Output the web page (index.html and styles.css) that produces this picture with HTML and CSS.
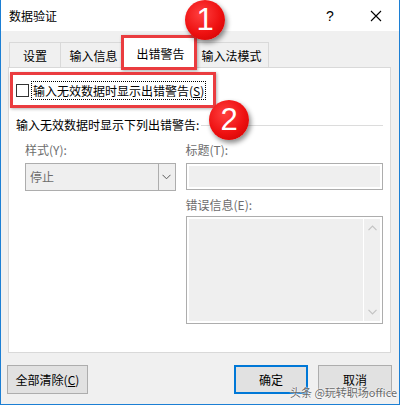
FILE: index.html
```html
<!DOCTYPE html>
<html lang="zh">
<head>
<meta charset="utf-8">
<title>数据验证</title>
<link rel="stylesheet" href="styles.css">
</head>
<body>
<div class="window">
  <div class="titlebar">
    <span class="title">数据验证</span>
    <span class="tb-btn">?</span>
    <span class="tb-btn">
      <svg width="12" height="12" viewBox="0 0 12 12"><path d="M1 1L11 11M11 1L1 11" stroke="#000" stroke-width="1.1" fill="none"/></svg>
    </span>
  </div>
  <div class="dialog">
    <div class="tabs">
      <div class="tab t1">设置</div>
      <div class="tab t2">输入信息</div>
      <div class="tab t3 active">出错警告</div>
      <div class="tab t4">输入法模式</div>
    </div>
    <div class="panel">
      <div class="check-row">
        <span class="checkbox"></span>
        <span class="check-label">输入无效数据时显示出错警告(<u>S</u>)</span>
      </div>
      <div class="group-head">
        <span>输入无效数据时显示下列出错警告:</span>
        <span class="group-line"></span>
      </div>
      <div class="fields">
        <div class="col left">
          <div class="lbl">样式(Y):</div>
          <div class="select">
            <span class="select-text">停止</span>
            <span class="select-btn">
              <svg width="9" height="6" viewBox="0 0 9 6"><path d="M0.5 0.8L4.5 4.8L8.5 0.8" stroke="#5a5a5a" stroke-width="1" fill="none"/></svg>
            </span>
          </div>
        </div>
        <div class="col right">
          <div class="lbl">标题(T):</div>
          <div class="input"></div>
          <div class="lbl lbl2">错误信息(E):</div>
          <div class="textarea">
            <div class="ta-fill"></div>
            <div class="ta-scroll">
              <svg width="9" height="6" viewBox="0 0 9 6"><path d="M0.5 5.2L4.5 1.2L8.5 5.2" stroke="#c3c3c3" stroke-width="1.2" fill="none"/></svg>
              <svg width="9" height="6" viewBox="0 0 9 6"><path d="M0.5 0.8L4.5 4.8L8.5 0.8" stroke="#c3c3c3" stroke-width="1.2" fill="none"/></svg>
            </div>
          </div>
        </div>
      </div>
    </div>
    <div class="buttons">
      <div class="btn clear">全部清除(<u>C</u>)</div>
      <div class="spacer"></div>
      <div class="btn ok">确定</div>
      <div class="btn">取消</div>
    </div>
  </div>

  <div class="mark box1"></div>
  <div class="mark box2"></div>
  <div class="circle c1">1</div>
  <div class="circle c2">2</div>
  <div class="watermark">头条 @玩转职场office</div>
</div>
</body>
</html>
```
FILE: styles.css
```css
* { box-sizing: border-box; }
html, body { margin: 0; padding: 0; }
body {
  width: 400px;
  height: 405px;
  overflow: hidden;
  background: #fff;
  font-family: "Noto Sans CJK SC", "Microsoft YaHei", sans-serif;
  font-size: 12px;
  color: #000;
}
.window {
  position: relative;
  width: 400px;
  height: 405px;
  border: 1px solid #1c7fd4;
  border-top: none;
  display: flex;
  flex-direction: column;
  background: #f0f0f0;
}
.titlebar {
  flex: none;
  height: 31px;
  background: #fff;
  display: flex;
  align-items: center;
  padding-left: 8px;
}
.title { flex: 1; line-height: 16px; }
.tb-btn {
  width: 46px;
  height: 31px;
  display: flex;
  align-items: center;
  justify-content: center;
  font-family: "Liberation Sans", Arial, sans-serif;
  font-size: 14px;
}
.dialog {
  flex: 1;
  display: flex;
  flex-direction: column;
}
.tabs {
  height: 36px;
  display: flex;
  align-items: flex-end;
  padding-left: 8px;
  position: relative;
  z-index: 1;
}
.tab {
  height: 25px;
  border: 1px solid #d9d9d9;
  border-bottom: none;
  background: #f0f0f0;
  display: flex;
  align-items: center;
  justify-content: center;
  line-height: 16px;
  padding-top: 1px;
  margin-left: -1px;
}
.t1 { width: 52px; margin-left: 0; }
.t2 { width: 63px; padding-left: 4px; }
.t3 { width: 73px; }
.t4 { width: 75px; }
.tab.active {
  height: 33px;
  margin-bottom: -1px;
  background: #fff;
  padding-top: 4px;
  padding-left: 4px;
  position: relative;
}
.panel {
  height: 286px;
  margin: 0 8px 0 7px;
  background: #fff;
  border: 1px solid #d9d9d9;
  padding: 13px 7px 0 7px;
  display: flex;
  flex-direction: column;
}
.check-row {
  height: 19px;
  display: flex;
  align-items: center;
}
.checkbox {
  width: 13px;
  height: 13px;
  border: 1px solid #333;
  background: #fff;
  margin-right: 2px;
}
.check-label {
  height: 19px;
  border: 1px dotted #000;
  padding: 0 1px;
  line-height: 17px;
}
.group-head {
  margin-top: 17px;
  height: 16px;
  line-height: 16px;
  display: flex;
  align-items: center;
}
.group-line {
  flex: 1;
  height: 1px;
  background: #dcdcdc;
  margin-left: 2px;
}
.fields {
  display: flex;
  gap: 10px;
  margin-top: 9px;
  padding-left: 9px;
}
.col { display: flex; flex-direction: column; }
.left { width: 151px; }
.right { width: 198px; }
.lbl {
  height: 16px;
  line-height: 16px;
  color: #6d6d6d;
  margin-bottom: 5px;
}
.lbl2 { margin-top: 7px; margin-bottom: 3px; }
.select {
  height: 28px;
  border: 1px solid #adadad;
  background: #efefef;
  display: flex;
  align-items: center;
}
.select-text {
  flex: 1;
  color: #6d6d6d;
  padding-left: 4px;
  line-height: 16px;
}
.select-btn {
  width: 17px;
  height: 26px;
  border-left: 1px solid #adadad;
  display: flex;
  align-items: center;
  justify-content: center;
}
.input {
  height: 27px;
  border: 1px solid #adadad;
  background: #efefef;
  box-shadow: inset 0 0 0 2px #fff;
}
.textarea {
  height: 108px;
  border: 1px solid #adadad;
  background: #fff;
  padding: 2px;
  display: flex;
  gap: 1px;
}
.ta-fill { flex: 1; background: #efefef; }
.ta-scroll {
  width: 16px;
  background: #efefef;
  display: flex;
  flex-direction: column;
  align-items: center;
  justify-content: space-between;
  padding: 6px 0 6px;
}
.buttons {
  margin-top: 12px;
  display: flex;
  padding: 0 7px 0 6px;
  gap: 10px;
}
.spacer { flex: 1; }
.btn {
  width: 74px;
  height: 29px;
  border: 1px solid #adadad;
  background: #e1e1e1;
  display: flex;
  align-items: center;
  justify-content: center;
  line-height: 16px;
}
.btn.clear { width: 81px; }
.btn.ok { border: 2px solid #0078d7; }
.mark {
  position: absolute;
  border: 3px solid #ea3c3f;
  box-shadow: 1px 1px 3px rgba(0,0,0,0.3);
  z-index: 5;
}
.box1 { left: 120px; top: 35px; width: 76px; height: 35px; }
.box2 { left: 9px; top: 72px; width: 206px; height: 36px; }
.circle {
  position: absolute;
  width: 40px;
  height: 40px;
  border-radius: 50%;
  background: radial-gradient(circle at 40% 35%, #ff4040 0%, #ee1111 55%, #c80000 100%);
  box-shadow: 2px 3px 5px rgba(0,0,0,0.45);
  color: #fff;
  font-family: "Liberation Sans", Arial, sans-serif;
  font-size: 31px;
  line-height: 40px;
  text-align: center;
  z-index: 6;
}
.c1 { left: 184px; top: 0px; }
.c2 { left: 208px; top: 100px; }
.watermark {
  position: absolute;
  left: 289px;
  top: 385px;
  font-size: 11px;
  line-height: 14px;
  color: rgba(85, 85, 85, 0.9);
  text-shadow: 0 0 2px #fff, 0 0 1px #fff;
  white-space: nowrap;
  z-index: 7;
}
```
